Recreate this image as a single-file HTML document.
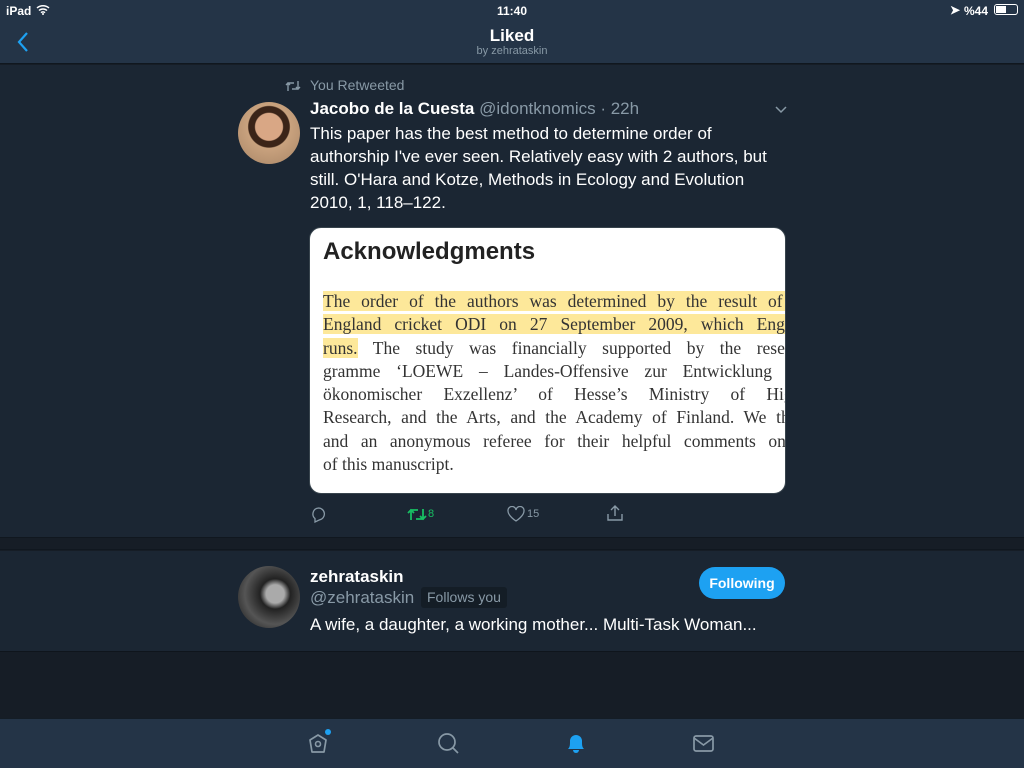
<!DOCTYPE html>
<html><head><meta charset="utf-8"><style>
*{margin:0;padding:0;box-sizing:border-box}
body{width:1024px;height:768px;overflow:hidden;background:#161d26;font-family:"Liberation Sans",sans-serif;color:#fff;position:relative}
.hdr{position:absolute;left:0;top:0;width:1024px;height:64px;background:#243447;border-bottom:1px solid #10171f}
.ab{position:absolute}
.sec{position:absolute;left:0;width:1024px;background:#1b2633}
.txt{font-size:17px;line-height:23px;color:#fff}
.gray{color:#8899a6}
.ser div{width:492px;text-align:justify;text-align-last:justify;white-space:nowrap;overflow:visible}
</style></head><body>
<div class="hdr">
 <div class="ab" style="left:6px;top:4px;font-size:12px;font-weight:bold">iPad</div>
 <svg class="ab" style="left:36px;top:4px" width="14" height="11" viewBox="0 0 14 11"><path d="M1 4a9 9 0 0 1 12 0M3 6.5a6 6 0 0 1 8 0M5 8.7a3 3 0 0 1 4 0" stroke="#fff" stroke-width="1.5" fill="none"/><circle cx="7" cy="10" r="1" fill="#fff"/></svg>
 <div class="ab" style="left:0;width:1024px;top:4px;text-align:center;font-size:12px;font-weight:bold">11:40</div>
 <div class="ab" style="left:950px;top:3px;font-size:12px;font-weight:bold">➤</div>
 <div class="ab" style="left:964px;top:4px;font-size:12px;font-weight:bold">%44</div>
 <div class="ab" style="left:994px;top:4px;width:24px;height:11px;border:1px solid #fff;border-radius:3px"><div style="width:10px;height:7px;background:#fff;margin:1px"></div></div>
 <svg class="ab" style="left:16px;top:31px" width="14" height="22"><path d="M11 2L3 11l8 9" stroke="#1da1f2" stroke-width="2.2" fill="none"/></svg>
 <div class="ab" style="left:0;width:1024px;top:26px;text-align:center;font-size:17px;font-weight:bold">Liked</div>
 <div class="ab gray" style="left:0;width:1024px;top:45px;text-align:center;font-size:11px">by zehrataskin</div>
</div>
<div class="sec" style="top:65px;height:472px">
 <svg class="ab" style="left:285px;top:15px" width="16" height="12" viewBox="0 0 16 12"><path d="M3 11V3h6M1 5l2-2 2 2M13 1v8H7M11 7l2 2 2-2" stroke="#8899a6" stroke-width="1.4" fill="none"/></svg>
 <div class="ab gray" style="left:310px;top:12px;font-size:14px">You Retweeted</div>
 <div class="ab" style="left:238px;top:37px;width:62px;height:62px;border-radius:50%;background:radial-gradient(circle at 50% 40%,#d9a785 0 28%,#3b2418 30% 42%,#c9a27e 44%,#a88566 100%)"></div>
 <div class="ab txt" style="left:310px;top:32px"><b>Jacobo de la Cuesta</b> <span class="gray">@idontknomics · 22h</span></div>
 <svg class="ab" style="left:774px;top:40px" width="14" height="10"><path d="M2 2l5 5 5-5" stroke="#8899a6" stroke-width="1.5" fill="none"/></svg>
 <div class="ab txt" style="left:310px;top:57px;width:470px">This paper has the best method to determine order of authorship I've ever seen. Relatively easy with 2 authors, but still. O'Hara and Kotze, Methods in Ecology and Evolution 2010, 1, 118–122.</div>
 <div class="ab" style="left:309px;top:162px;width:477px;height:267px;background:#fff;border-radius:12px;border:1px solid #38444d;overflow:hidden;color:#222">
  <div class="ab" style="left:13px;top:10px;font-size:24px;font-weight:bold;color:#222">Acknowledgments</div>
  <div class="ab ser" style="left:13px;top:62px;font-family:'Liberation Serif',serif;font-size:17.5px;line-height:23.3px;color:#333">
   <div><span style="background:#fde89a">The order of the authors was determined by the result of the</span></div>
   <div><span style="background:#fde89a">England cricket ODI on 27 September 2009, which England</span></div>
   <div><span style="background:#fde89a">runs.</span> The study was financially supported by the research</div>
   <div>gramme ‘LOEWE – Landes-Offensive zur Entwicklung Wis</div>
   <div>ökonomischer Exzellenz’ of Hesse’s Ministry of Higher</div>
   <div>Research, and the Arts, and the Academy of Finland. We thank</div>
   <div>and an anonymous referee for their helpful comments on an</div>
   <div style="text-align:left;text-align-last:left">of this manuscript.</div>
  </div>
 </div>
 <svg class="ab" style="left:310px;top:441px" width="17" height="17" viewBox="0 0 17 17"><path d="M8.5 2a6 6 0 0 1 1 11.9L5 16v-3.5A6 6 0 0 1 8.5 2z" stroke="#8899a6" stroke-width="1.3" fill="none"/></svg>
 <svg class="ab" style="left:407px;top:442px" width="20" height="15" viewBox="0 0 20 15"><path d="M4 13V3h7M1 6l3-3 3 3M16 2v10H9M13 9l3 3 3-3" stroke="#17bf63" stroke-width="1.8" fill="none"/></svg>
 <div class="ab" style="left:428px;top:443px;font-size:11px;color:#17bf63">8</div>
 <svg class="ab" style="left:507px;top:441px" width="18" height="16" viewBox="0 0 18 16"><path d="M9 15S1 10 1 5a4 4 0 0 1 8-1 4 4 0 0 1 8 1c0 5-8 10-8 10z" stroke="#8899a6" stroke-width="1.3" fill="none"/></svg>
 <div class="ab gray" style="left:527px;top:443px;font-size:11px">15</div>
 <svg class="ab" style="left:606px;top:439px" width="18" height="18" viewBox="0 0 18 18"><path d="M9 12V2M5 6l4-4 4 4M2 10v6h14v-6" stroke="#8899a6" stroke-width="1.4" fill="none"/></svg>
</div>
<div class="ab" style="left:0;top:537px;width:1024px;height:13px;background:#161d26;border-top:1px solid #10171f;border-bottom:1px solid #10171f"></div>
<div class="sec" style="top:551px;height:101px;border-bottom:1px solid #0f151c">
 <div class="ab" style="left:238px;top:15px;width:62px;height:62px;border-radius:50%;background:radial-gradient(circle at 60% 45%,#aaa 0 18%,#222 30%,#555 60%,#111 100%)"></div>
 <div class="ab txt" style="left:310px;top:14px;font-weight:bold">zehrataskin</div>
 <div class="ab txt gray" style="left:310px;top:35px">@zehrataskin</div>
 <div class="ab gray" style="left:421px;top:36px;background:#141d26;padding:1px 6px;font-size:14px;line-height:19px;border-radius:3px">Follows you</div>
 <div class="ab" style="left:699px;top:16px;width:86px;height:32px;border-radius:16px;background:#1da1f2;font-size:14px;font-weight:bold;text-align:center;line-height:32px">Following</div>
 <div class="ab txt" style="left:310px;top:62px">A wife, a daughter, a working mother... Multi-Task Woman...</div>
</div>
<div class="ab" style="left:0;top:718px;width:1024px;height:50px;background:#243447;border-top:1px solid #141d26">
 <svg class="ab" style="left:307px;top:12px" width="24" height="24" viewBox="0 0 24 24"><path d="M3 9l8-5 8 5-2 12H5z" stroke="#8899a6" stroke-width="1.7" fill="none" stroke-linejoin="round"/><circle cx="11" cy="13" r="2.5" stroke="#8899a6" stroke-width="1.6" fill="none"/></svg>
 <div class="ab" style="left:325px;top:10px;width:6px;height:6px;border-radius:50%;background:#1da1f2"></div>
 <svg class="ab" style="left:437px;top:13px" width="24" height="24" viewBox="0 0 24 24"><circle cx="10" cy="10" r="8" stroke="#8899a6" stroke-width="1.7" fill="none"/><path d="M16 16l5 5" stroke="#8899a6" stroke-width="1.7"/></svg>
 <svg class="ab" style="left:564px;top:12px" width="24" height="26" viewBox="0 0 24 26"><path d="M4 18c2-2 2-4 2-8a6 6 0 0 1 12 0c0 4 0 6 2 8z" fill="#1da1f2"/><path d="M9 19a3 3 0 0 0 6 0" fill="#1da1f2"/></svg>
 <svg class="ab" style="left:692px;top:15px" width="24" height="20" viewBox="0 0 24 20"><rect x="2" y="2" width="19" height="15" rx="2" stroke="#8899a6" stroke-width="1.7" fill="none"/><path d="M2 4l9.5 7L21 4" stroke="#8899a6" stroke-width="1.7" fill="none"/></svg>
</div>
</body></html>
